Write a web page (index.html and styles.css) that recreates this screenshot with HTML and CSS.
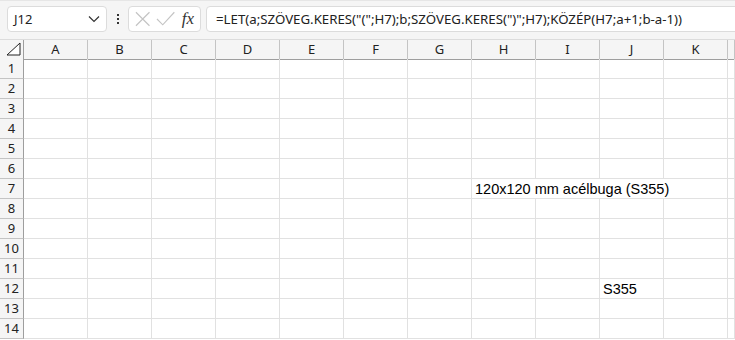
FILE: index.html
```html
<!DOCTYPE html>
<html lang="hu">
<head>
  <meta charset="UTF-8">
  <title>Munkafüzet</title>
  <link rel="stylesheet" href="styles.css">
</head>
<body>

<div class="topbar">
  <div class="namebox">
    <span>J12</span>
    <svg width="12" height="8" viewBox="0 0 12 8"><polyline points="1,1.5 6,6.5 11,1.5" fill="none" stroke="#333" stroke-width="1.2"/></svg>
  </div>
  <div class="dots"><i></i><i></i><i></i></div>
  <div class="fxbox">
    <svg width="16" height="16" viewBox="0 0 16 16"><path d="M1 1 L15 15 M15 1 L1 15" stroke="#c4c4c4" stroke-width="1.2"/></svg>
    <svg width="20" height="16" viewBox="0 0 20 16"><polyline points="1,8 7,14 19,1" fill="none" stroke="#c4c4c4" stroke-width="1.2"/></svg>
    <span class="fx">fx</span>
  </div>
  <div class="formula">=LET(a;SZÖVEG.KERES("(";H7);b;SZÖVEG.KERES(")";H7);KÖZÉP(H7;a+1;b-a-1))</div>
</div>

<div class="sheet">
  <div class="row head">
    <div class="corner"><svg width="16" height="14" viewBox="0 0 16 14"><polygon points="1,13 14,1 14,13" fill="#fff" stroke="#222" stroke-width="1"/></svg></div>
    <div>A</div><div>B</div><div>C</div><div>D</div><div>E</div><div>F</div><div>G</div><div>H</div><div>I</div><div>J</div><div>K</div><div></div>
  </div>
  <div class="row"><div class="rh">1</div><div></div><div></div><div></div><div></div><div></div><div></div><div></div><div></div><div></div><div></div><div></div><div></div></div>
  <div class="row"><div class="rh">2</div><div></div><div></div><div></div><div></div><div></div><div></div><div></div><div></div><div></div><div></div><div></div><div></div></div>
  <div class="row"><div class="rh">3</div><div></div><div></div><div></div><div></div><div></div><div></div><div></div><div></div><div></div><div></div><div></div><div></div></div>
  <div class="row"><div class="rh">4</div><div></div><div></div><div></div><div></div><div></div><div></div><div></div><div></div><div></div><div></div><div></div><div></div></div>
  <div class="row"><div class="rh">5</div><div></div><div></div><div></div><div></div><div></div><div></div><div></div><div></div><div></div><div></div><div></div><div></div></div>
  <div class="row"><div class="rh">6</div><div></div><div></div><div></div><div></div><div></div><div></div><div></div><div></div><div></div><div></div><div></div><div></div></div>
  <div class="row"><div class="rh">7</div><div></div><div></div><div></div><div></div><div></div><div></div><div></div><div class="text span4">120x120 mm acélbuga (S355)</div><div></div></div>
  <div class="row"><div class="rh">8</div><div></div><div></div><div></div><div></div><div></div><div></div><div></div><div></div><div></div><div></div><div></div><div></div></div>
  <div class="row"><div class="rh">9</div><div></div><div></div><div></div><div></div><div></div><div></div><div></div><div></div><div></div><div></div><div></div><div></div></div>
  <div class="row"><div class="rh">10</div><div></div><div></div><div></div><div></div><div></div><div></div><div></div><div></div><div></div><div></div><div></div><div></div></div>
  <div class="row"><div class="rh">11</div><div></div><div></div><div></div><div></div><div></div><div></div><div></div><div></div><div></div><div></div><div></div><div></div></div>
  <div class="row"><div class="rh">12</div><div></div><div></div><div></div><div></div><div></div><div></div><div></div><div></div><div></div><div class="text">S355</div><div></div><div></div></div>
  <div class="row"><div class="rh">13</div><div></div><div></div><div></div><div></div><div></div><div></div><div></div><div></div><div></div><div></div><div></div><div></div></div>
  <div class="row"><div class="rh">14</div><div></div><div></div><div></div><div></div><div></div><div></div><div></div><div></div><div></div><div></div><div></div><div></div></div>
</div>

</body>
</html>
```

FILE: styles.css
```css
* {
  box-sizing: border-box;
}

body {
  margin: 0;
  font-family: "Noto Sans", sans-serif;
  background: #fff;
  overflow: hidden;
  color: #222;
}

/* Formula bar */
.topbar {
  height: 39px;
  background: #f5f5f5;
  border-top: 1px solid #e6e6e6;
  display: flex;
  align-items: flex-start;
  padding: 5px 0 0 7px;
  overflow: hidden;
}

.namebox {
  width: 100px;
  height: 26px;
  background: #fff;
  border: 1px solid #dcdcdc;
  border-radius: 4px;
  display: flex;
  align-items: center;
  justify-content: space-between;
  padding: 0 6px 0 6px;
  font-size: 13px;
}

.dots {
  width: 21px;
  height: 26px;
  display: flex;
  flex-direction: column;
  align-items: center;
  justify-content: center;
  gap: 2px;
}

.dots i {
  width: 2px;
  height: 2px;
  background: #333;
}

.fxbox {
  width: 73px;
  height: 26px;
  background: #fff;
  border: 1px solid #dcdcdc;
  border-radius: 4px;
  display: flex;
  align-items: center;
  gap: 6px;
  padding: 0 6px 0 6px;
}

.fxbox .fx {
  margin-left: auto;
  font-family: "Liberation Serif", serif;
  font-style: italic;
  font-size: 17px;
  color: #333;
}

.formula {
  flex: 1;
  margin-left: 5px;
  margin-right: -10px;
  height: 26px;
  background: #fff;
  border: 1px solid #dcdcdc;
  border-radius: 4px;
  padding: 0 0 0 9px;
  font-size: 13.25px;
  line-height: 24px;
  white-space: nowrap;
}

/* Grid */
.sheet {
  height: 301px;
  overflow: hidden;
}

.row {
  display: grid;
  grid-template-columns: 24px repeat(11, 64px) 1fr;
  height: 20px;
}

.row > div {
  border-right: 1px solid #e1e1e1;
  border-bottom: 1px solid #e1e1e1;
}

.row > .rh {
  background: #f5f5f5;
  border-right: 1px solid #9e9e9e;
  border-bottom: 1px solid #c4c4c4;
  font-size: 13px;
  line-height: 19px;
  text-align: center;
}

.head {
  border-top: 1px solid #dcdcdc;
}

.head > div {
  background: #f5f5f5;
  border-right: 1px solid #c4c4c4;
  border-bottom: 1px solid #9e9e9e;
  font-size: 13px;
  line-height: 19px;
  text-align: center;
}

.head > .corner {
  border-right: 1px solid #9e9e9e;
  display: flex;
  align-items: flex-end;
  justify-content: flex-end;
  padding: 0 1px 3px 0;
}

.text {
  font-family: "Liberation Sans", Arial, sans-serif;
  font-size: 14.5px;
  line-height: 18px;
  padding: 1px 0 0 3px;
  color: #000;
  white-space: nowrap;
}

.span4 {
  grid-column: span 4;
}
```
